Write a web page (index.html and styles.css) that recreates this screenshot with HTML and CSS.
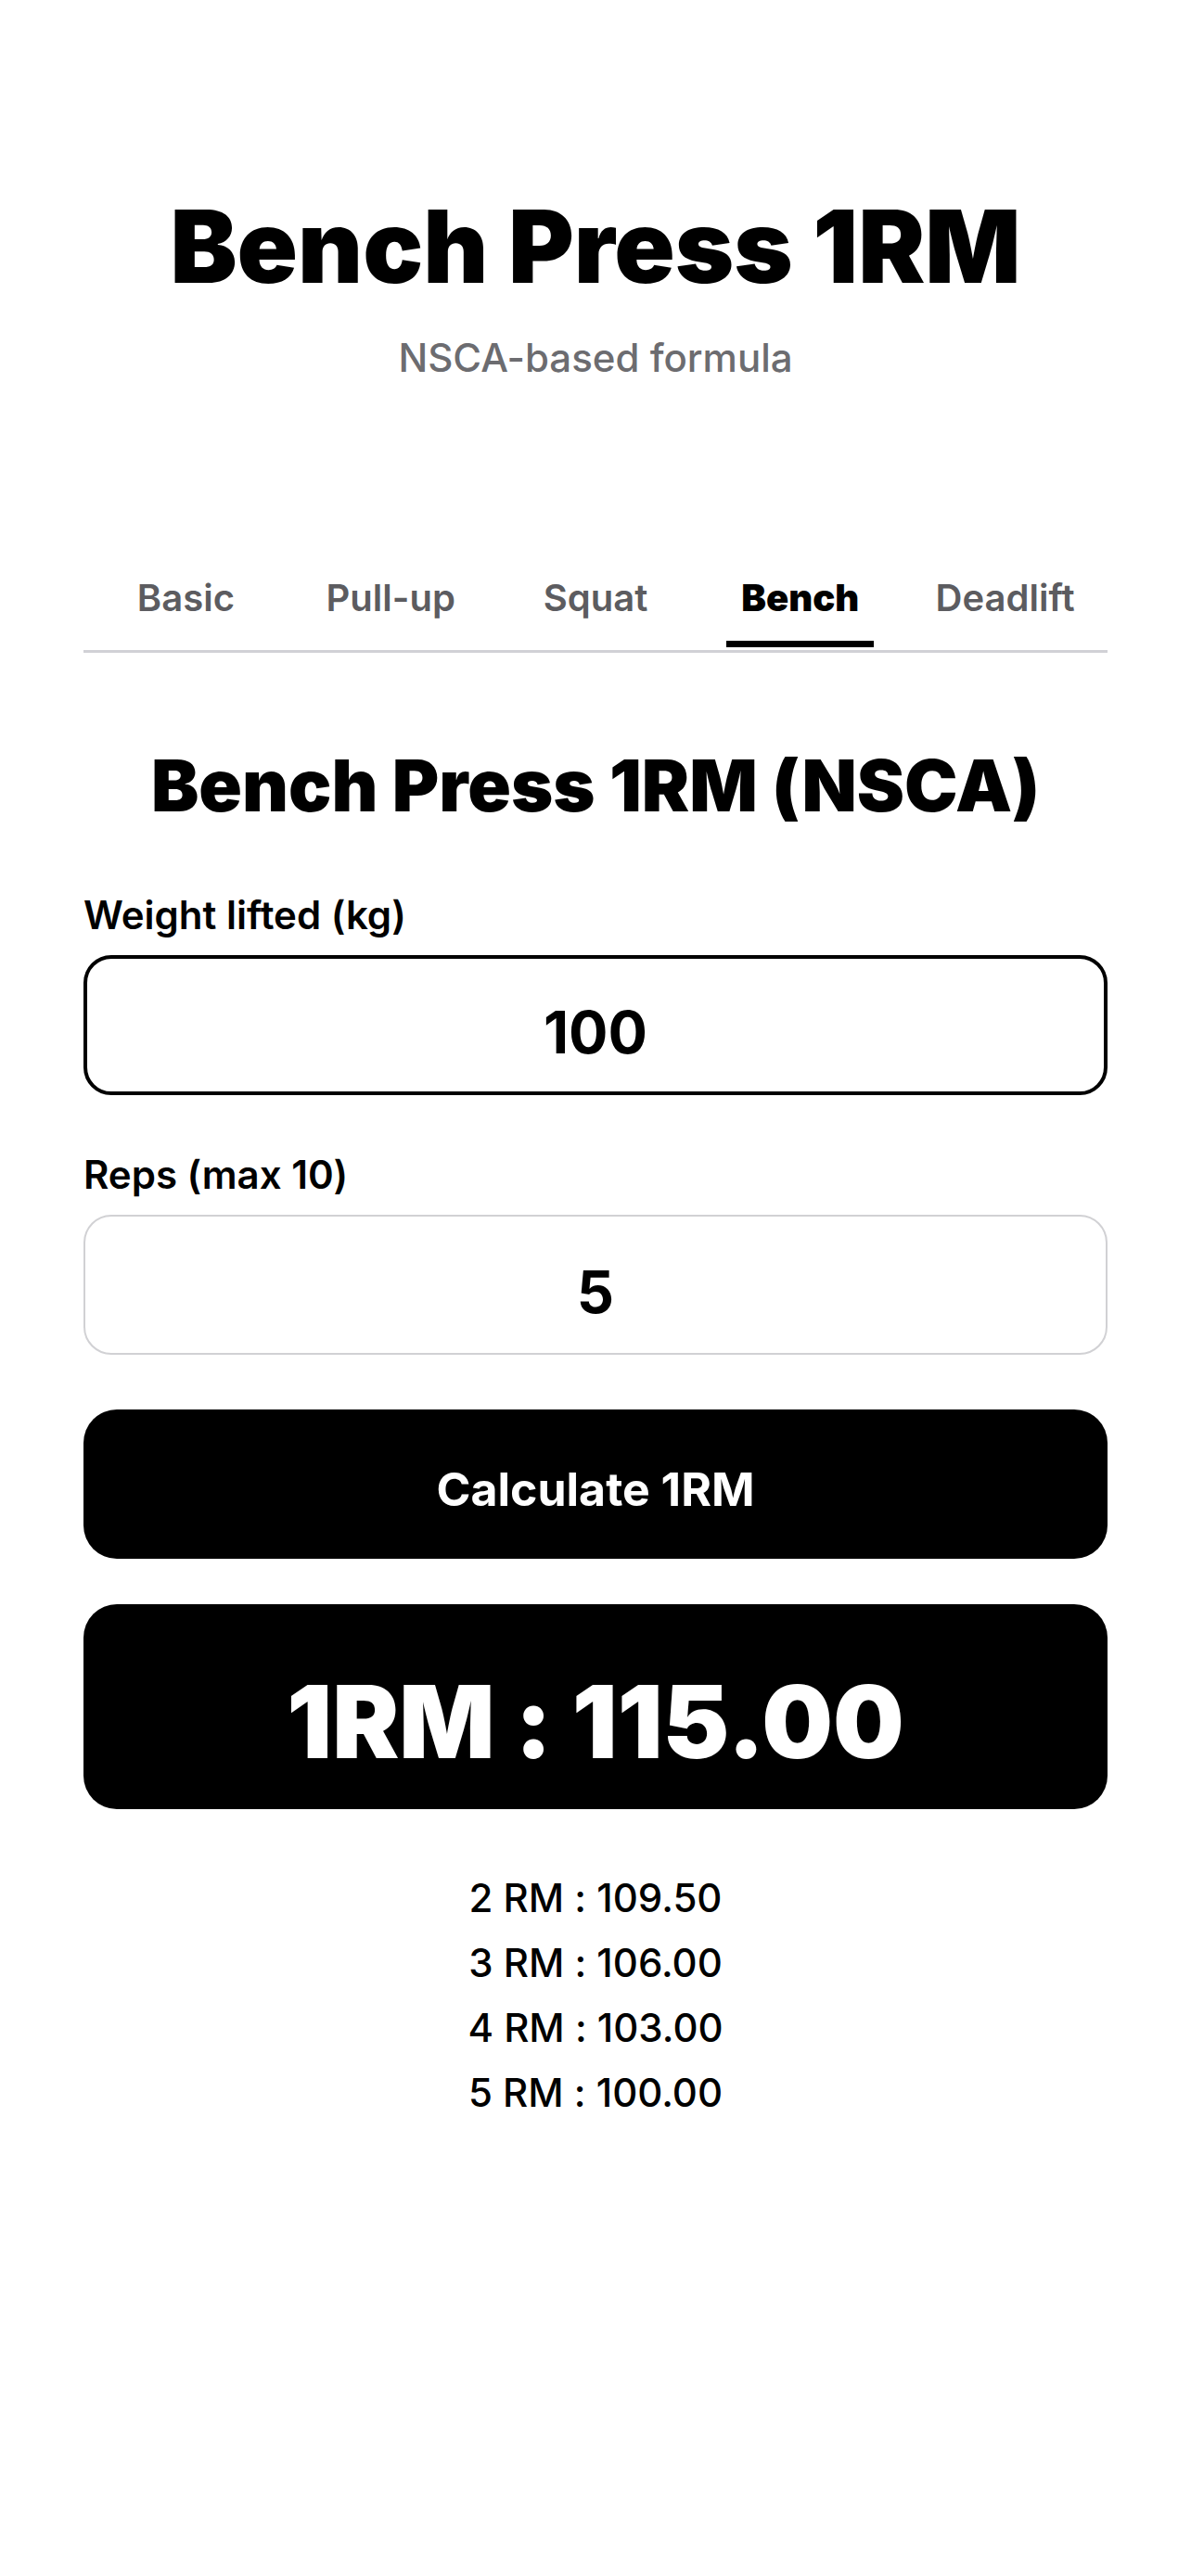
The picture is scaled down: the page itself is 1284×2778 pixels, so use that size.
FILE: index.html
```html
<!DOCTYPE html>
<html lang="en">
<head>
  <meta charset="UTF-8" />
  <meta name="viewport" content="width=device-width, initial-scale=1" />
  <title>Bench Press 1RM</title>
  <link rel="stylesheet" href="styles.css">
</head>
<body>
  <div class="container">
    <header class="header">
      <h1>Bench Press 1RM</h1>
      <p class="subtitle">NSCA-based formula</p>
    </header>

    <nav class="tabs">
      <a href="#basic">Basic</a>
      <a href="#pullup">Pull-up</a>
      <a href="#squat">Squat</a>
      <a href="#bench" class="active">Bench</a>
      <a href="#deadlift">Deadlift</a>
    </nav>

    <form class="calculator" id="bench">
      <h2>Bench Press 1RM (NSCA)</h2>

      <label for="weight">Weight lifted (kg)</label>
      <input type="text" inputmode="decimal" id="weight" class="focused" value="100">

      <label for="reps">Reps (max 10)</label>
      <input type="text" inputmode="numeric" id="reps" value="5">

      <button type="button" class="calculate">Calculate 1RM</button>
    </form>

    <div class="result">1RM : 115.00</div>

    <ul class="rm-list">
      <li>2 RM : 109.50</li>
      <li>3 RM : 106.00</li>
      <li>4 RM : 103.00</li>
      <li>5 RM : 100.00</li>
    </ul>
  </div>
</body>
</html>
```
FILE: styles.css
```css
* {
  box-sizing: border-box;
}
body {
  font-family: Inter, 'Liberation Sans', sans-serif;
  font-variant-ligatures: no-contextual;
  background: #fff;
  color: #000;
  margin: 0;
}
.container {
  padding: 200px 90px 80px;
}

.header {
  text-align: center;
}
h1 {
  font-size: 108px;
  font-weight: 900;
  line-height: 132px;
  margin: 0;
}
.subtitle {
  font-size: 42px;
  font-weight: 500;
  line-height: 52px;
  color: #6c6c70;
  margin: 28px 0 0;
}

.tabs {
  display: grid;
  grid-template-columns: repeat(5, 1fr);
  justify-items: center;
  margin-top: 191px;
  border-bottom: 3px solid #d1d1d6;
}
.tabs a {
  padding: 16px 16px 20px;
  margin-bottom: 3px;
  border-bottom: 7px solid transparent;
  font-size: 40px;
  font-weight: 600;
  line-height: 52px;
  color: #5c5c60;
  text-decoration: none;
}
.tabs a.active {
  color: #000;
  font-weight: 900;
  border-bottom-color: #000;
}

h2 {
  font-size: 77px;
  font-weight: 900;
  line-height: 92px;
  text-align: center;
  margin: 97px 0 68px;
}
label {
  display: block;
  font-size: 42px;
  font-weight: 600;
  line-height: 52px;
  margin-bottom: 17px;
}
input {
  display: block;
  width: 100%;
  height: 151px;
  padding: 14px 40px 0;
  margin-bottom: 59px;
  border: 2px solid #d1d1d4;
  border-radius: 30px;
  background: #fff;
  color: #000;
  font-family: inherit;
  font-size: 63px;
  font-weight: 700;
  text-align: center;
  outline: none;
}
input.focused {
  border: 4px solid #000;
  margin-bottom: 60px;
}

.calculate {
  display: block;
  width: 100%;
  height: 161px;
  padding: 10px 0 0;
  border: none;
  border-radius: 36px;
  background: #000;
  color: #fff;
  font-family: inherit;
  font-size: 50px;
  font-weight: 700;
  cursor: pointer;
}

.result {
  margin-top: 49px;
  padding: 61px 0 28px;
  border-radius: 36px;
  background: #000;
  color: #fff;
  font-size: 108px;
  font-weight: 900;
  line-height: 132px;
  text-align: center;
}

.rm-list {
  list-style: none;
  margin: 61px 0 0;
  padding: 0;
  font-size: 42px;
  font-weight: 500;
  line-height: 70px;
  text-align: center;
}
```
